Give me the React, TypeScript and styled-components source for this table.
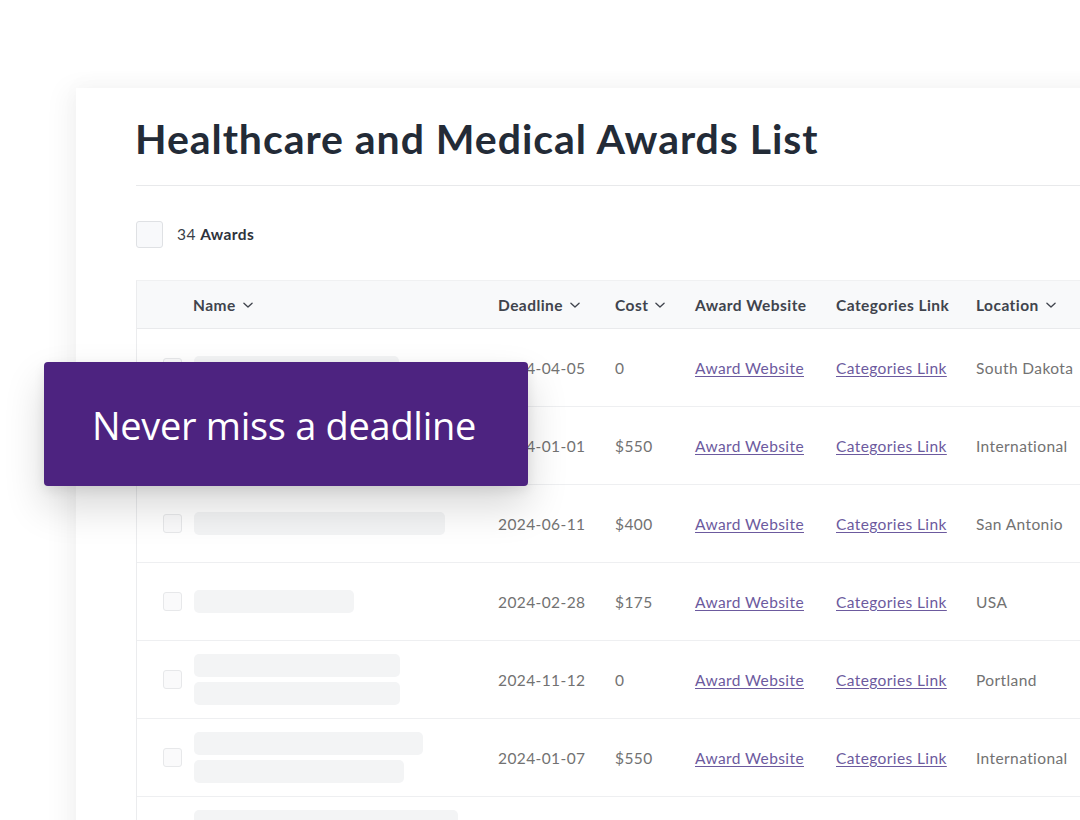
import React from "react";
import styled, { createGlobalStyle } from "styled-components";

const Global = createGlobalStyle`
  html, body { margin: 0; padding: 0; background: #ffffff; }
  body { font-family: Lato, "Open Sans", sans-serif; }
`;

const Page = styled.div`
  position: relative;
  width: 1080px;
  height: 820px;
  overflow: hidden;
  background: #ffffff;
  padding: 88px 0 0 76px;
  box-sizing: border-box;
`;

const Card = styled.div`
  width: 1100px;
  min-height: 800px;
  background: #ffffff;
  box-shadow: -10px 0 24px rgba(0, 0, 0, 0.045), 0 -6px 20px rgba(0, 0, 0, 0.02);
  padding: 26px 0 0 59px;
  box-sizing: border-box;
`;

const Title = styled.h1`
  margin: 0;
  font-family: Lato, sans-serif;
  font-weight: 700;
  font-size: 41px;
  line-height: 50px;
  color: #232b37;
  letter-spacing: 0.95px;
`;

const Divider = styled.div`
  height: 1px;
  background: #e8e9eb;
  margin: 21px 0 0 1px;
`;

const CountRow = styled.div`
  display: flex;
  align-items: center;
  gap: 14px;
  margin: 34px 0 0 1px;
  height: 28px;
`;

const BigCheck = styled.div`
  width: 25px;
  height: 25px;
  border: 1px solid #dfe1e4;
  border-radius: 3px;
  background: #f8f9fb;
`;

const Count = styled.span`
  font-size: 15.5px;
  letter-spacing: 0.4px;
  color: #3a3f48;
  b { font-weight: 700; color: #2e333c; }
`;

const Table = styled.div`
  margin: 32px 0 0 1px;
  border-left: 1px solid #ebecee;
  border-top: 1px solid #f0f1f2;
`;

const cols = "56px 305px 117px 80px 141px 140px 1fr";

const HeadRow = styled.div`
  display: grid;
  grid-template-columns: ${cols};
  height: 47px;
  align-items: center;
  background: #f8f9fa;
  border-bottom: 1px solid #e9eaec;
`;

const HeadCell = styled.div`
  display: flex;
  align-items: center;
  gap: 5px;
  font-size: 15.5px;
  font-weight: 700;
  letter-spacing: 0.45px;
  color: #40444d;
  white-space: nowrap;
`;

const Row = styled.div`
  display: grid;
  grid-template-columns: ${cols};
  height: 77px;
  align-items: center;
  border-bottom: 1px solid #eeeff1;
`;

const CheckCell = styled.div`
  padding-left: 26px;
`;

const SmallCheck = styled.div`
  width: 17px;
  height: 17px;
  border: 1px solid #e7e8ea;
  border-radius: 3px;
  background: #fafafb;
`;

const NameCell = styled.div`
  display: flex;
  flex-direction: column;
  gap: 5px;
  padding-left: 1px;
`;

const Skeleton = styled.div<{ $w: number }>`
  height: 23px;
  width: ${(p) => p.$w}px;
  background: #f3f4f5;
  border-radius: 5px;
`;

const Cell = styled.div`
  font-size: 15.5px;
  letter-spacing: 0.4px;
  color: #727272;
  white-space: nowrap;
`;

const LinkCell = styled.a`
  font-size: 15.5px;
  letter-spacing: 0.4px;
  color: #6c5a9e;
  text-decoration: underline;
  text-underline-offset: 2px;
  white-space: nowrap;
  justify-self: start;
`;

const Banner = styled.div`
  position: absolute;
  left: 44px;
  top: 362px;
  width: 484px;
  height: 124px;
  background: #4d2380;
  border-radius: 4px;
  box-shadow: 0 20px 40px rgba(0, 0, 0, 0.16), 0 4px 12px rgba(0, 0, 0, 0.08);
  display: flex;
  align-items: center;
  justify-content: center;
  font-family: "Open Sans", sans-serif;
  font-size: 38px;
  color: #ffffff;
  letter-spacing: -0.3px;
  padding: 2px 4px 0 0;
  box-sizing: border-box;
`;

const Chevron = () => (
  <svg width="14" height="14" viewBox="0 0 24 24" fill="none" stroke="#40444d" strokeWidth="2.3" strokeLinecap="round" strokeLinejoin="round">
    <path d="M5 9l7 6.5 7-6.5" />
  </svg>
);

type R = { bars: number[]; date?: string; cost?: string; loc?: string };

const rows: R[] = [
  { bars: [205], date: "2024-04-05", cost: "0", loc: "South Dakota" },
  { bars: [205], date: "2024-01-01", cost: "$550", loc: "International" },
  { bars: [251], date: "2024-06-11", cost: "$400", loc: "San Antonio" },
  { bars: [160], date: "2024-02-28", cost: "$175", loc: "USA" },
  { bars: [206, 206], date: "2024-11-12", cost: "0", loc: "Portland" },
  { bars: [229, 210], date: "2024-01-07", cost: "$550", loc: "International" },
  { bars: [264, 236] },
];

export default function App() {
  return (
    <>
      <Global />
      <Page>
        <Card>
          <Title>Healthcare and Medical Awards List</Title>
          <Divider />
          <CountRow>
            <BigCheck />
            <Count>
              34 <b>Awards</b>
            </Count>
          </CountRow>
          <Table>
            <HeadRow>
              <div />
              <HeadCell>
                Name <Chevron />
              </HeadCell>
              <HeadCell>
                Deadline <Chevron />
              </HeadCell>
              <HeadCell>
                Cost <Chevron />
              </HeadCell>
              <HeadCell>Award Website</HeadCell>
              <HeadCell>Categories Link</HeadCell>
              <HeadCell>
                Location <Chevron />
              </HeadCell>
            </HeadRow>
            {rows.map((r, i) => (
              <Row key={i}>
                <CheckCell>
                  <SmallCheck />
                </CheckCell>
                <NameCell>
                  {r.bars.map((w, j) => (
                    <Skeleton key={j} $w={w} />
                  ))}
                </NameCell>
                {r.date ? (
                  <>
                    <Cell>{r.date}</Cell>
                    <Cell>{r.cost}</Cell>
                    <LinkCell href="#">Award Website</LinkCell>
                    <LinkCell href="#">Categories Link</LinkCell>
                    <Cell>{r.loc}</Cell>
                  </>
                ) : null}
              </Row>
            ))}
          </Table>
        </Card>
        <Banner>Never miss a deadline</Banner>
      </Page>
    </>
  );
}
